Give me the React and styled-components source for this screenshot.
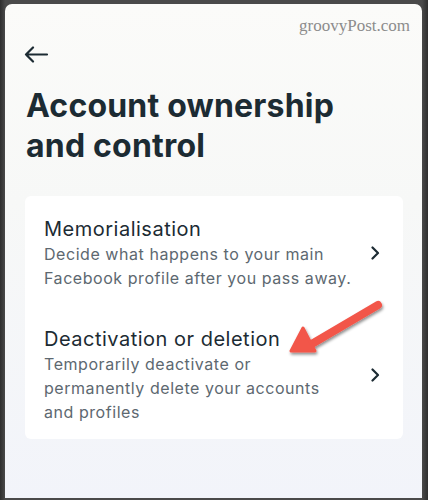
import React from 'react';
import styled, { createGlobalStyle } from 'styled-components';

const Global = createGlobalStyle`
  html, body { margin: 0; padding: 0; background: #3b3b3b; }
  body { font-family: Inter, "Noto Sans", sans-serif; }
`;

const Frame = styled.div`
  width: 428px;
  height: 500px;
  box-sizing: border-box;
  padding: 4px 6px 2px 5px;
  background: linear-gradient(90deg, #2e2e2e 0%, #4a4a4a 1.2%, #4a4a4a 98.6%, #2e2e2e 100%);
`;

const Screen = styled.div`
  position: relative;
  height: 100%;
  border-radius: 7px 7px 0 0;
  background: linear-gradient(180deg, #fbfbf9 0%, #f7f8f7 40%, #f2f4fa 100%);
  display: flex;
  flex-direction: column;
  overflow: hidden;
`;

const Watermark = styled.div`
  align-self: flex-end;
  margin: 12px 12px 0 0;
  font-family: "Liberation Serif", serif;
  font-size: 17px;
  color: #8c8c8c;
  line-height: 20px;
`;

const BackButton = styled.button`
  align-self: flex-start;
  margin: 8px 0 0 19px;
  padding: 0;
  border: 0;
  background: none;
  width: 26px;
  height: 20px;
  display: flex;
  align-items: center;
  color: #1c2b33;
`;

const Title = styled.h1`
  margin: 22px 0 0 21px;
  font-size: 32px;
  font-weight: 700;
  line-height: 40px;
  color: #1c2b33;
  letter-spacing: 0.2px;
`;

const Card = styled.div`
  margin: 30px 19px 0 20px;
  background: #fff;
  border-radius: 6px;
  padding: 20px 0 15px;
  display: flex;
  flex-direction: column;
  gap: 36px;
`;

const Row = styled.div`
  display: flex;
  align-items: center;
  padding: 0 23px 0 19px;
`;

const RowText = styled.div`
  flex: 1;
`;

const RowTitle = styled.div`
  font-size: 20px;
  line-height: 26px;
  color: #1c2b33;
  letter-spacing: 0.5px;
`;

const RowDesc = styled.div`
  font-size: 16px;
  line-height: 24px;
  color: #5d6870;
  letter-spacing: 0.55px;
  max-width: ${p => p.$max}px;
`;

const Chevron = styled.svg`
  flex: none;
  margin-left: 12px;
`;

const Annotation = styled.svg`
  position: absolute;
  left: 0;
  top: 0;
  pointer-events: none;
`;

const rows = [
  {
    title: 'Memorialisation',
    desc: 'Decide what happens to your main Facebook profile after you pass away.',
    max: 310,
  },
  {
    title: 'Deactivation or deletion',
    desc: 'Temporarily deactivate or permanently delete your accounts and profiles',
    max: 290,
  },
];

export default function App() {
  return (
    <>
      <Global />
      <Frame>
        <Screen>
          <Watermark>groovyPost.com</Watermark>
          <BackButton aria-label="Back">
            <svg width="25" height="17" viewBox="0 0 25 17" fill="none" stroke="currentColor" strokeWidth="2.2" strokeLinecap="round" strokeLinejoin="round">
              <path d="M23 8.5H2M9 1.5L2 8.5l7 7" />
            </svg>
          </BackButton>
          <Title>Account ownership<br />and control</Title>
          <Card>
            {rows.map(r => (
              <Row key={r.title}>
                <RowText>
                  <RowTitle>{r.title}</RowTitle>
                  <RowDesc $max={r.max}>{r.desc}</RowDesc>
                </RowText>
                <Chevron width="10" height="14" viewBox="0 0 10 14" fill="none" stroke="#1c2b33" strokeWidth="2.2" strokeLinecap="round" strokeLinejoin="round">
                  <path d="M2.5 1.5l5.5 5.5-5.5 5.5" />
                </Chevron>
              </Row>
            ))}
          </Card>
          <Annotation width="417" height="494" viewBox="0 0 417 494">
            <defs>
              <filter id="sh" x="-20%" y="-20%" width="140%" height="140%">
                <feDropShadow dx="1" dy="2" stdDeviation="1.5" floodColor="#000" floodOpacity="0.45" />
              </filter>
            </defs>
            <g filter="url(#sh)" fill="#f2564a" stroke="#f2564a" strokeLinejoin="round">
              <path d="M373 301L305 341" strokeWidth="8" strokeLinecap="round" fill="none" />
              <path d="M286 347L298 324L310 347Z" strokeWidth="3" />
            </g>
          </Annotation>
        </Screen>
      </Frame>
    </>
  );
}
